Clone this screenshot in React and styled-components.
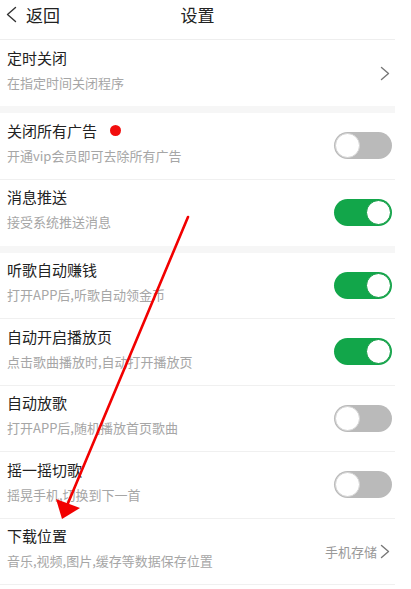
import styled, { createGlobalStyle } from 'styled-components';

const GlobalStyle = createGlobalStyle`
  html, body {
    margin: 0;
    padding: 0;
    background: #fff;
  }
  body {
    font-family: "Noto Sans CJK SC", "Noto Sans", sans-serif;
    color: #222;
  }
`;

const Page = styled.div`
  position: relative;
  width: 395px;
  background: #fff;
`;

const Header = styled.div`
  height: 40px;
  box-sizing: border-box;
  padding-bottom: 10px;
  border-bottom: 1px solid #eeeeee;
  display: flex;
  align-items: center;
  position: relative;

  & .back {
    display: flex;
    align-items: center;
    gap: 9px;
    padding-left: 6px;
    font-size: 17px;
    color: #222;
  }

  & .title {
    position: absolute;
    left: 0;
    right: 0;
    top: 0;
    bottom: 10px;
    display: flex;
    align-items: center;
    justify-content: center;
    font-size: 17px;
    color: #222;
    pointer-events: none;
  }
`;

const Row = styled.div`
  box-sizing: border-box;
  border-bottom: ${(p) => (p.$last ? 'none' : '1px solid #f0f0f0')};
  display: flex;
  align-items: center;
  justify-content: space-between;
  padding: 0 3px 0 7px;
  height: ${(p) => (p.$last ? '66px' : '66.5px')};
`;

const Band = styled.div`
  height: 7px;
  background: #f6f6f6;
`;

const TextBox = styled.div`
  display: flex;
  flex-direction: column;
  gap: 5px;
  align-self: flex-start;
  padding-top: 6.5px;

  & .name {
    font-size: 15px;
    line-height: 22px;
    color: #222;
    display: flex;
    align-items: center;
  }

  & .desc {
    font-size: 13px;
    line-height: 18px;
    color: #a6a6a6;
  }
`;

const Dot = styled.span`
  width: 11px;
  height: 11px;
  border-radius: 50%;
  background: #f20d0d;
  margin-left: 13px;
`;

const Toggle = styled.div`
  width: 58px;
  height: 27px;
  border-radius: 14px;
  background: ${(p) => (p.$on ? '#12a64a' : '#bababa')};
  position: relative;
  flex-shrink: 0;

  &::after {
    content: '';
    position: absolute;
    top: 1px;
    ${(p) => (p.$on ? 'right: 1px;' : 'left: 1px;')}
    width: 25px;
    height: 25px;
    border-radius: 50%;
    background: #fff;
    box-sizing: border-box;
    border: 1px solid ${(p) => (p.$on ? '#0f9a42' : '#d4d4d4')};
  }
`;

const Right = styled.div`
  display: flex;
  align-items: center;
  gap: 3px;
  color: #999;
  font-size: 13px;
  padding-right: 2px;
`;

const Arrow = styled.svg`
  position: absolute;
  left: 0;
  top: 0;
  pointer-events: none;
`;

function Chevron({ dir = 'right', w = 10, h = 15, color = '#777' }) {
  const d = dir === 'right' ? `M1.5 1.5 L${w - 1.5} ${h / 2} L1.5 ${h - 1.5}` : `M${w - 1.5} 1.5 L1.5 ${h / 2} L${w - 1.5} ${h - 1.5}`;
  return (
    <svg width={w} height={h} viewBox={`0 0 ${w} ${h}`}>
      <path d={d} fill="none" stroke={color} strokeWidth="1.4" strokeLinecap="round" strokeLinejoin="round" />
    </svg>
  );
}

const groups = [
  [{ name: '定时关闭', desc: '在指定时间关闭程序', type: 'link' }],
  [
    { name: '关闭所有广告', desc: '开通vip会员即可去除所有广告', type: 'toggle', on: false, dot: true },
    { name: '消息推送', desc: '接受系统推送消息', type: 'toggle', on: true },
  ],
  [
    { name: '听歌自动赚钱', desc: '打开APP后,听歌自动领金币', type: 'toggle', on: true },
    { name: '自动开启播放页', desc: '点击歌曲播放时,自动打开播放页', type: 'toggle', on: true },
    { name: '自动放歌', desc: '打开APP后,随机播放首页歌曲', type: 'toggle', on: false },
    { name: '摇一摇切歌', desc: '摇晃手机,切换到下一首', type: 'toggle', on: false },
    { name: '下载位置', desc: '音乐,视频,图片,缓存等数据保存位置', type: 'link', value: '手机存储' },
  ],
];

function SettingRow({ item, last }) {
  return (
    <Row $last={last}>
      <TextBox>
        <div className="name">
          {item.name}
          {item.dot && <Dot />}
        </div>
        <div className="desc">{item.desc}</div>
      </TextBox>
      {item.type === 'toggle' ? (
        <Toggle $on={item.on} />
      ) : (
        <Right>
          {item.value}
          <Chevron />
        </Right>
      )}
    </Row>
  );
}

export default function App() {
  return (
    <Page>
      <GlobalStyle />
      <Header>
        <div className="back">
          <Chevron dir="left" w={11} h={17} color="#333" />
          返回
        </div>
        <div className="title">设置</div>
      </Header>
      {groups.map((group, gi) => (
        <div key={gi}>
          {group.map((item, i) => (
            <SettingRow key={item.name} item={item} last={i === group.length - 1 && gi < groups.length - 1} />
          ))}
          {gi < groups.length - 1 && <Band />}
        </div>
      ))}
      <Arrow width="395" height="589" viewBox="0 0 395 589">
        <line x1="188" y1="217" x2="66" y2="508" stroke="#f20000" strokeWidth="2.6" strokeLinecap="round" />
        <polygon points="62,519 56,499 80,508" fill="#f20000" />
      </Arrow>
    </Page>
  );
}
